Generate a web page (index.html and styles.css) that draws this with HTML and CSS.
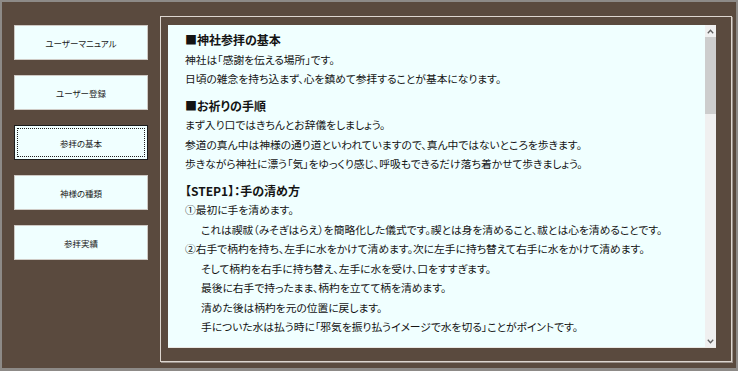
FILE: index.html
```html
<!DOCTYPE html>
<html lang="ja">
<head>
<meta charset="utf-8">
<title>神社参拝</title>
<link rel="stylesheet" href="styles.css">
</head>
<body>
<div class="window">
  <nav class="sidebar">
    <button class="nav-btn">ユーザーマニュアル</button>
    <button class="nav-btn">ユーザー登録</button>
    <button class="nav-btn is-active"><span class="focus-ring">参拝の基本</span></button>
    <button class="nav-btn">神様の種類</button>
    <button class="nav-btn">参拝実績</button>
  </nav>
  <section class="panel">
    <div class="content-box">
      <div class="content">
        <p class="heading">■神社参拝の基本</p>
        <p class="line">神社は「感謝を伝える場所」です。</p>
        <p class="line">日頃の雑念を持ち込まず、心を鎮めて参拝することが基本になります。</p>
        <p class="heading">■お祈りの手順</p>
        <p class="line">まず入り口ではきちんとお辞儀をしましょう。</p>
        <p class="line">参道の真ん中は神様の通り道といわれていますので、真ん中ではないところを歩きます。</p>
        <p class="line">歩きながら神社に漂う「気」をゆっくり感じ、呼吸もできるだけ落ち着かせて歩きましょう。</p>
        <p class="heading">【STEP1】：手の清め方</p>
        <p class="line">①最初に手を清めます。</p>
        <p class="line indent">これは禊祓（みそぎはらえ）を簡略化した儀式です。禊とは身を清めること、祓とは心を清めることです。</p>
        <p class="line">②右手で柄杓を持ち、左手に水をかけて清めます。次に左手に持ち替えて右手に水をかけて清めます。</p>
        <p class="line indent">そして柄杓を右手に持ち替え、左手に水を受け、口をすすぎます。</p>
        <p class="line indent">最後に右手で持ったまま、柄杓を立てて柄を清めます。</p>
        <p class="line indent">清めた後は柄杓を元の位置に戻します。</p>
        <p class="line indent">手についた水は払う時に「邪気を振り払うイメージで水を切る」ことがポイントです。</p>
      </div>
      <div class="scrollbar">
        <div class="sb-btn">
          <svg width="7" height="5" viewBox="0 0 7 5"><path d="M0.8 4.2 L3.5 1.3 L6.2 4.2" fill="none" stroke="#5f5f5f" stroke-width="1.3"/></svg>
        </div>
        <div class="sb-thumb"></div>
        <div class="sb-track"></div>
        <div class="sb-btn">
          <svg width="7" height="5" viewBox="0 0 7 5"><path d="M0.8 0.8 L3.5 3.7 L6.2 0.8" fill="none" stroke="#5f5f5f" stroke-width="1.3"/></svg>
        </div>
      </div>
    </div>
  </section>
</div>
</body>
</html>
```

FILE: styles.css
```css
* { box-sizing: border-box; }

html, body {
  margin: 0;
  padding: 0;
  background: #5a4a3e;
}

.window {
  width: 738px;
  height: 371px;
  border: 2px solid #8d8a87;
  border-bottom-width: 3px;
  background: #5a4a3e;
  display: flex;
  align-items: flex-start;
  font-family: "Noto Sans CJK JP", "Noto Sans", sans-serif;
  color: #141414;
}

.sidebar {
  width: 158px;
  flex: none;
  padding: 23px 0 0 12px;
  display: flex;
  flex-direction: column;
  gap: 15px;
}

.nav-btn {
  width: 134px;
  height: 35px;
  margin: 0;
  padding: 0;
  border: 1px solid #cfcac5;
  background: #f0ffff;
  font-family: "Noto Sans CJK JP", sans-serif;
  font-size: 8.5px;
  font-feature-settings: "palt" 1;
  color: #1a1a1a;
  display: flex;
  align-items: center;
  justify-content: center;
}

.nav-btn.is-active {
  border: 1px solid #1c1c1c;
  padding: 2px;
}

.focus-ring {
  width: 100%;
  height: 100%;
  border: 1px dotted #222;
  display: flex;
  align-items: center;
  justify-content: center;
}

.panel {
  margin-top: 14px;
  width: 572px;
  height: 346px;
  border: 1px solid #ddd6cf;
  box-shadow: 1px 1px 0 #9a9089;
  padding: 8px 15px 13px 7px;
}

.content-box {
  height: 100%;
  display: flex;
  background: #f0ffff;
  border-bottom: 1px solid #ebe8e4;
}

.content {
  flex: 1;
  overflow: hidden;
  padding: 5px 0 0 17px;
  font-feature-settings: "palt" 1;
}

.content p {
  margin: 0;
  white-space: nowrap;
}

.line {
  font-size: 10.75px;
  line-height: 19.5px;
}

.line.indent {
  padding-left: 16px;
}

.heading {
  font-size: 12px;
  font-weight: bold;
  line-height: 19.5px;
  margin-top: 7px !important;
}

.heading:first-child {
  margin-top: 0 !important;
}

.scrollbar {
  width: 11px;
  flex: none;
  display: flex;
  flex-direction: column;
  background: #f0f0f0;
}

.sb-btn {
  height: 12px;
  flex: none;
  display: flex;
  align-items: center;
  justify-content: center;
}

.sb-thumb {
  height: 77px;
  flex: none;
  background: #cdcdcd;
}

.sb-track {
  flex: 1;
}
```
